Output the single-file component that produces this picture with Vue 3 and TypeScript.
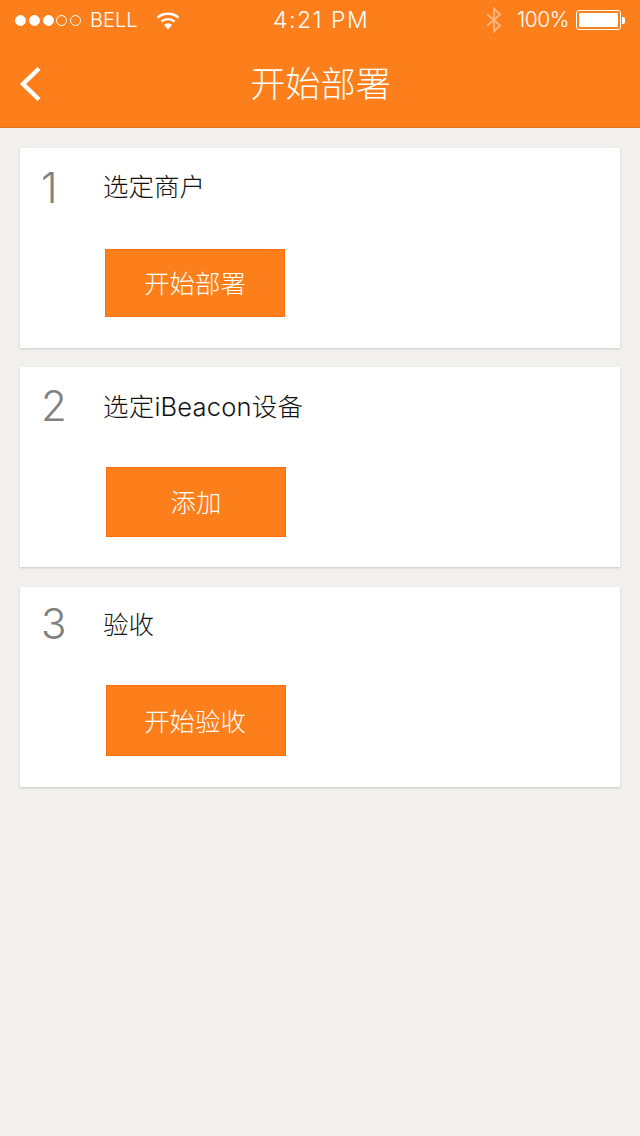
<template>
  <div class="page">
    <header class="top">
      <div class="status">
        <div class="status__left">
          <span v-for="n in 5" :key="n" class="dot" :class="{ 'dot--on': n <= 3 }"></span>
          <span class="carrier">BELL</span>
          <svg class="wifi" width="24" height="19" viewBox="0 0 24 19">
            <path d="M1.5 6.6C7.2 1.4 16.8 1.4 22.5 6.6" fill="none" stroke="#fff" stroke-width="2.4" />
            <path d="M5.4 10.6C9.1 7.3 14.9 7.3 18.6 10.6" fill="none" stroke="#fff" stroke-width="2.4" />
            <path d="M8 14C10.4 12.1 13.6 12.1 16 14L12 18.4Z" fill="#fff" />
          </svg>
        </div>
        <span class="time">4:21 PM</span>
        <div class="status__right">
          <svg class="bt" width="16" height="26" viewBox="0 0 16 26">
            <path d="M1.5 7.5L14 18.5L8 24.5V1.5L14 7.5L1.5 18.5" fill="none" stroke="#fff" stroke-opacity=".45" stroke-width="1.8" />
          </svg>
          <span class="pct">100%</span>
          <div class="battery"><div class="battery__fill"></div></div>
          <div class="battery__tip"></div>
        </div>
      </div>
      <div class="nav">
        <svg class="back" width="24" height="36" viewBox="0 0 24 36">
          <path d="M20 2.5L4 18L20 33.5" fill="none" stroke="#fff" stroke-width="4.4" />
        </svg>
        <h1>开始部署</h1>
      </div>
    </header>

    <main class="steps">
      <section
        v-for="step in steps"
        :key="step.no"
        class="card"
        :class="`card--${step.no}`"
      >
        <div class="card__head">
          <span class="card__no">{{ step.no }}</span>
          <span class="card__title">{{ step.title }}</span>
        </div>
        <button class="card__btn" type="button">{{ step.action }}</button>
      </section>
    </main>
  </div>
</template>

<script setup lang="ts">
type Step = {
  no: number;
  title: string;
  action: string;
};

const steps: Step[] = [
  { no: 1, title: '选定商户', action: '开始部署' },
  { no: 2, title: '选定iBeacon设备', action: '添加' },
  { no: 3, title: '验收', action: '开始验收' }
];
</script>

<style>
body {
  margin: 0;
  background: #f1f0ed;
}
</style>

<style scoped>
.page {
  min-height: 1136px;
  background: #f1f0ed;
  font-family: Inter, "Noto Sans CJK SC", sans-serif;
  font-weight: 300;
}

.top {
  height: 127px;
  background: #fc7f1b;
  border-bottom: 1px solid #e0742a;
  color: #fff;
}

.status {
  position: relative;
  display: flex;
  align-items: center;
  justify-content: space-between;
  height: 40px;
  padding: 0 15px;
}

.status__left,
.status__right {
  display: flex;
  align-items: center;
}

.dot {
  box-sizing: border-box;
  width: 11px;
  height: 11px;
  margin-right: 2.8px;
  border: 1px solid #fff;
  border-radius: 50%;
}

.dot--on {
  background: #fff;
}

.carrier,
.time,
.pct {
  font-weight: 300;
  line-height: 24px;
}

.carrier {
  margin-left: 6px;
  font-size: 20px;
}

.wifi {
  margin-left: 19px;
}

.time {
  position: absolute;
  left: 273px;
  font-size: 23px;
  letter-spacing: 1.5px;
}

.bt {
  margin-right: 15px;
}

.pct {
  margin-right: 7px;
  font-size: 21px;
  letter-spacing: -0.5px;
}

.battery {
  box-sizing: border-box;
  width: 45px;
  height: 20px;
  padding: 2px;
  border: 1px solid #fff;
  border-radius: 3px;
}

.battery__fill {
  height: 100%;
  border-radius: 1px;
  background: #fff;
}

.battery__tip {
  width: 3px;
  height: 7px;
  margin-left: 1px;
  border-radius: 0 2px 2px 0;
  background: #fff;
}

.nav {
  position: relative;
  height: 87px;
  padding-left: 1px;
  text-align: center;
}

.nav h1 {
  margin: 0;
  font-size: 35.2px;
  font-weight: 300;
  line-height: 88px;
}

.back {
  position: absolute;
  left: 19px;
  top: 26px;
}

.steps {
  padding: 20px 20px 0;
}

.card {
  box-sizing: border-box;
  height: 200px;
  margin-bottom: 19.4px;
  padding: 17px 0 0 85px;
  background: #fff;
  box-shadow: 0 1px 2px rgba(0, 0, 0, 0.16);
}

.card__head {
  position: relative;
  height: 84px;
  color: #111;
}

.card__no {
  position: absolute;
  left: -64px;
  top: 0;
  color: #808080;
  font-size: 42px;
  font-weight: 300;
  line-height: 46px;
}

.card__title {
  display: block;
  margin-left: -2px;
  font-size: 25.5px;
  line-height: 44px;
}

.card__btn {
  display: block;
  box-sizing: border-box;
  width: 180px;
  height: 70px;
  margin-left: 1px;
  padding: 0 0 2px;
  border: 1px solid #f96f12;
  border-radius: 0;
  background: #fc7f1b;
  color: #fff;
  font: inherit;
  font-size: 25.4px;
}

.card--1 .card__btn {
  height: 68px;
  margin-left: 0;
}

.card--2 {
  padding-top: 18px;
}

.card--2 .card__head {
  height: 82px;
}

.card--2 .card__no {
  top: -2px;
}

.card--2 .card__title {
  letter-spacing: 0.2px;
}

.card--3 {
  padding-top: 16px;
}

.card--3 .card__head {
  height: 82.5px;
}

.card--3 .card__no {
  top: -2px;
}

.card--3 .card__btn {
  height: 70.5px;
  padding-right: 2px;
}
</style>
